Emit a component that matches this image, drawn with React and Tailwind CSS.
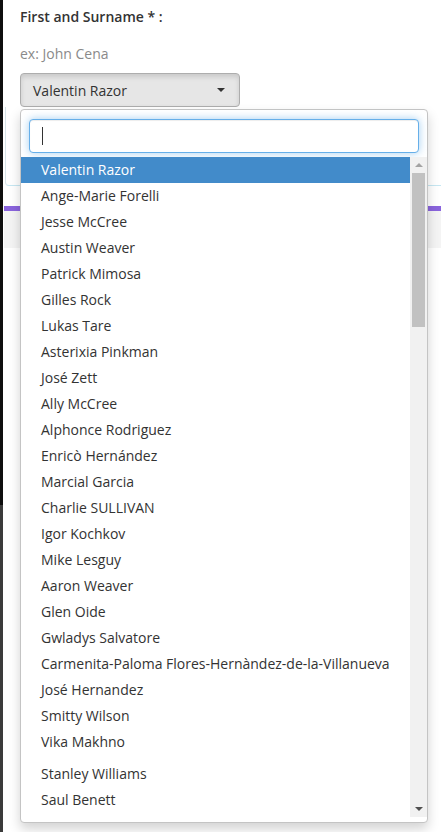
import React from "react";

const names = [
  "Valentin Razor",
  "Ange-Marie Forelli",
  "Jesse McCree",
  "Austin Weaver",
  "Patrick Mimosa",
  "Gilles Rock",
  "Lukas Tare",
  "Asterixia Pinkman",
  "José Zett",
  "Ally McCree",
  "Alphonce Rodriguez",
  "Enricò Hernández",
  "Marcial Garcia",
  "Charlie SULLIVAN",
  "Igor Kochkov",
  "Mike Lesguy",
  "Aaron Weaver",
  "Glen Oide",
  "Gwladys Salvatore",
  "Carmenita-Paloma Flores-Hernàndez-de-la-Villanueva",
  "José Hernandez",
  "Smitty Wilson",
  "Vika Makhno",
];
const names2 = ["Stanley Williams", "Saul Benett"];

export default function App() {
  return (
    <div
      className="relative flex w-[441px] h-[832px] overflow-hidden bg-white text-[14px] text-[#333]"
      style={{ fontFamily: '"Open Sans", "Liberation Sans", sans-serif' }}
    >
      {/* left dark strip */}
      <div className="flex w-[3px] shrink-0 flex-col">
        <div className="h-[505px] bg-[#0e0e0e]" />
        <div className="flex-1 bg-[#3b3b3b]" />
      </div>

      {/* page content */}
      <div className="flex flex-1 flex-col">
        <div className="pl-[17px] pt-[7px] font-semibold leading-5">First and Surname * :</div>
        <div className="mt-[17px] pl-[17px] leading-5 text-[#8a8a8a]">ex: John Cena</div>
        <div className="mt-[9px] pl-[17px]">
          <div className="flex h-[34px] w-[220px] items-center justify-between rounded-[4px] border border-[#adadad] bg-[#e6e6e6] pl-[12px] pr-[14px] shadow-[inset_0_3px_5px_rgba(0,0,0,0.125)]">
            <span>Valentin Razor</span>
            <span className="h-0 w-0 border-x-[4px] border-t-[4px] border-x-transparent border-t-[#333]" />
          </div>
        </div>
        <div className="ml-[2px] h-[79px] rounded-bl-[4px] border-b border-l border-[#c6e7f2] border-l-[#d6e3e8]" />
        <div className="mt-[20px] ml-[1px] h-[5px] bg-[#8a64dd]" />
        <div className="ml-[1px] h-[37px] bg-[#f4f4f4]" />
      </div>

      {/* open dropdown menu */}
      <div className="absolute left-[20px] top-[109px] flex h-[714px] w-[408px] flex-col rounded-[4px] border border-[#c4c4c4] bg-white pt-[5px] pb-[5px] shadow-[0_6px_12px_rgba(0,0,0,0.175)]">
        <div className="px-[8px] pt-[4px] pb-[4px]">
          <div className="flex h-[34px] items-center rounded-[4px] border border-[#66afe9] bg-white pl-[12px] shadow-[inset_0_1px_1px_rgba(0,0,0,0.075),0_0_8px_rgba(102,175,233,0.6)]">
            <span className="h-[18px] w-px bg-[#333]" />
          </div>
        </div>
        <div className="flex min-h-0 flex-1">
          <div className="flex-1 overflow-hidden">
            {names.map((n, i) => (
              <div
                key={n}
                className={
                  i === 0
                    ? "h-[26px] whitespace-nowrap bg-[#428bca] px-[20px] py-[3px] leading-5 text-white"
                    : "h-[26px] whitespace-nowrap px-[20px] py-[3px] leading-5 text-[#333]"
                }
              >
                {n}
              </div>
            ))}
            <div className="mt-[6px]">
              {names2.map((n) => (
                <div key={n} className="h-[26px] whitespace-nowrap px-[20px] py-[3px] leading-5 text-[#333]">
                  {n}
                </div>
              ))}
            </div>
          </div>
          {/* scrollbar */}
          <div className="flex w-[17px] shrink-0 flex-col bg-[#f1f1f1]">
            <div className="flex h-[16px] items-center justify-center">
              <span className="h-0 w-0 border-x-[4px] border-b-[4px] border-x-transparent border-b-[#a3a3a3]" />
            </div>
            <div className="mx-[2px] h-[154px] bg-[#c1c1c1]" />
            <div className="flex-1" />
            <div className="flex h-[17px] items-center justify-center">
              <span className="h-0 w-0 border-x-[4px] border-t-[4px] border-x-transparent border-t-[#505050]" />
            </div>
          </div>
        </div>
      </div>
    </div>
  );
}
